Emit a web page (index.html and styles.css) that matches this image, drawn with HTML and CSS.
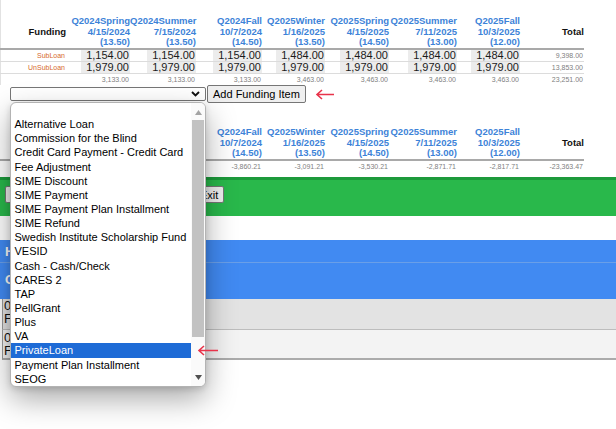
FILE: index.html
```html
<!DOCTYPE html>
<html>
<head>
<meta charset="utf-8">
<link rel="stylesheet" href="styles.css">
</head>
<body>
<div class="page">
  <table class="fund first">
    <colgroup>
      <col class="c-label"><col class="c-q1"><col class="c-q2"><col class="c-q3"><col class="c-q4"><col class="c-q5"><col class="c-q6"><col class="c-q7"><col class="c-total">
    </colgroup>
    <thead>
      <tr>
        <th class="lbl">Funding</th>
        <th class="q">Q2024Spring<br>4/15/2024<br>(13.50)</th>
        <th class="q">Q2024Summer<br>7/15/2024<br>(13.50)</th>
        <th class="q">Q2024Fall<br>10/7/2024<br>(14.50)</th>
        <th class="q">Q2025Winter<br>1/16/2025<br>(13.50)</th>
        <th class="q">Q2025Spring<br>4/15/2025<br>(14.50)</th>
        <th class="q">Q2025Summer<br>7/11/2025<br>(13.00)</th>
        <th class="q">Q2025Fall<br>10/3/2025<br>(12.00)</th>
        <th class="tot">Total</th>
      </tr>
    </thead>
    <tbody>
      <tr>
        <td class="name">SubLoan</td>
        <td><div class="amt">1,154.00</div></td>
        <td><div class="amt">1,154.00</div></td>
        <td><div class="amt">1,154.00</div></td>
        <td><div class="amt">1,484.00</div></td>
        <td><div class="amt">1,484.00</div></td>
        <td><div class="amt">1,484.00</div></td>
        <td><div class="amt">1,484.00</div></td>
        <td class="sum">9,398.00</td>
      </tr>
      <tr>
        <td class="name">UnSubLoan</td>
        <td><div class="amt">1,979.00</div></td>
        <td><div class="amt">1,979.00</div></td>
        <td><div class="amt">1,979.00</div></td>
        <td><div class="amt">1,979.00</div></td>
        <td><div class="amt">1,979.00</div></td>
        <td><div class="amt">1,979.00</div></td>
        <td><div class="amt">1,979.00</div></td>
        <td class="sum">13,853.00</td>
      </tr>
      <tr class="totals">
        <td></td>
        <td class="sum">3,133.00</td>
        <td class="sum">3,133.00</td>
        <td class="sum">3,133.00</td>
        <td class="sum">3,463.00</td>
        <td class="sum">3,463.00</td>
        <td class="sum">3,463.00</td>
        <td class="sum">3,463.00</td>
        <td class="sum">23,251.00</td>
      </tr>
    </tbody>
  </table>

  <div class="add-row">
    <div class="select">
      <svg class="chev" width="9" height="6" viewBox="0 0 9 6"><polyline points="1,1 4.5,4.5 8,1" fill="none" stroke="#111" stroke-width="1.9"/></svg>
    </div>
    <button class="btn">Add Funding Item</button>
    <svg class="red-arrow" width="20" height="11" viewBox="0 0 20 11"><path d="M19 5.5H2M7 1L2 5.5L7 10" fill="none" stroke="#e8334a" stroke-width="1.6"/></svg>
  </div>

  <table class="fund second">
    <colgroup>
      <col class="c-label"><col class="c-q1"><col class="c-q2"><col class="c-q3"><col class="c-q4"><col class="c-q5"><col class="c-q6"><col class="c-q7"><col class="c-total">
    </colgroup>
    <thead>
      <tr>
        <th class="lbl">Balance</th>
        <th class="q">Q2024Spring<br>4/15/2024<br>(13.50)</th>
        <th class="q">Q2024Summer<br>7/15/2024<br>(13.50)</th>
        <th class="q">Q2024Fall<br>10/7/2024<br>(14.50)</th>
        <th class="q">Q2025Winter<br>1/16/2025<br>(13.50)</th>
        <th class="q">Q2025Spring<br>4/15/2025<br>(14.50)</th>
        <th class="q">Q2025Summer<br>7/11/2025<br>(13.00)</th>
        <th class="q">Q2025Fall<br>10/3/2025<br>(12.00)</th>
        <th class="tot">Total</th>
      </tr>
    </thead>
    <tbody>
      <tr class="totals">
        <td></td>
        <td class="sum">-3,596.21</td>
        <td class="sum">-3,596.21</td>
        <td class="sum">-3,860.21</td>
        <td class="sum">-3,091.21</td>
        <td class="sum">-3,530.21</td>
        <td class="sum">-2,871.71</td>
        <td class="sum">-2,817.71</td>
        <td class="sum">-23,363.47</td>
      </tr>
    </tbody>
  </table>

  <div class="action-bar">
    <button class="btn">Save Changes</button>
    <button class="btn">Print Summary</button>
    <button class="btn">Exit</button>
  </div>

  <div class="grid">
    <div class="grid-head">History</div>
    <div class="grid-cols">Charges</div>
    <div class="grid-row odd"><div>0.00</div><div>Fee</div></div>
    <div class="grid-row even"><div>0.00</div><div>Fee</div></div>
  </div>

  <div class="popup">
    <div class="opts">
      <div class="opt"></div>
      <div class="opt">Alternative Loan</div>
      <div class="opt">Commission for the Blind</div>
      <div class="opt">Credit Card Payment - Credit Card</div>
      <div class="opt">Fee Adjustment</div>
      <div class="opt">SIME Discount</div>
      <div class="opt">SIME Payment</div>
      <div class="opt">SIME Payment Plan Installment</div>
      <div class="opt">SIME Refund</div>
      <div class="opt">Swedish Institute Scholarship Fund</div>
      <div class="opt">VESID</div>
      <div class="opt">Cash - Cash/Check</div>
      <div class="opt">CARES 2</div>
      <div class="opt">TAP</div>
      <div class="opt">PellGrant</div>
      <div class="opt">Plus</div>
      <div class="opt">VA</div>
      <div class="opt sel">PrivateLoan</div>
      <div class="opt">Payment Plan Installment</div>
      <div class="opt">SEOG</div>
    </div>
    <div class="sbar">
      <svg class="sb-up" width="7" height="5" viewBox="0 0 7 5"><polygon points="0,5 3.5,0 7,5" fill="#a3a3a3"/></svg>
      <div class="thumb"></div>
      <svg class="sb-down" width="7" height="5" viewBox="0 0 7 5"><polygon points="0,0 7,0 3.5,5" fill="#505050"/></svg>
    </div>
  </div>

  <svg class="red-arrow pick-arrow" width="22" height="11" viewBox="0 0 22 11"><path d="M21 5.5H2M7 1L2 5.5L7 10" fill="none" stroke="#e8334a" stroke-width="1.6"/></svg>
</div>
</body>
</html>
```

FILE: styles.css
```css
* { box-sizing: border-box; }
html, body { margin: 0; padding: 0; background: #fff; }
body {
  font-family: "Liberation Sans", Arial, sans-serif;
  width: 616px;
  height: 429px;
  overflow: hidden;
}
.page { position: relative; width: 616px; height: 429px; }

.fund {
  border-collapse: separate;
  border-spacing: 0;
  table-layout: fixed;
  width: 584px;
}
.fund.first { box-shadow: inset 1px 0 0 #e2e2e2; }
.c-label { width: 71px; }
.c-q1 { width: 59px; }
.c-q2 { width: 66px; }
.c-q3 { width: 66px; }
.c-q4 { width: 63px; }
.c-q5 { width: 64px; }
.c-q6 { width: 68px; }
.c-q7 { width: 63px; }
.c-total { width: 64px; }

.fund th {
  padding: 16px 0 0 0;
  font-size: 9.5px;
  font-weight: bold;
  line-height: 10.67px;
  text-align: right;
  white-space: nowrap;
  border-bottom: 2px solid #a9a9a9;
}
.fund.second th { padding-top: 24px; }
.fund th.q { color: #3d83d8; vertical-align: bottom; }
.fund th.lbl { color: #111; vertical-align: middle; padding-right: 5px; }
.fund th.tot { color: #111; vertical-align: middle; }

.fund td {
  padding: 0;
  height: 12px;
  border-bottom: 1px solid #dcdcdc;
  vertical-align: middle;
}
.fund tr.totals td { border-bottom: none; height: 11px; }
.fund td.name {
  font-size: 7px;
  color: #d66a2e;
  text-align: right;
  padding-right: 6px;
}
.fund td.sum {
  font-size: 7px;
  color: #808080;
  text-align: right;
  padding-right: 1px;
}
.amt {
  width: 49px;
  margin-left: auto;
  height: 11px;
  background: #ececec;
  font-size: 11px;
  line-height: 11px;
  color: #1b1b1b;
  text-align: right;
  padding-right: 1px;
}

.add-row {
  display: flex;
  align-items: center;
  height: 18px;
  padding-left: 10px;
}
.select {
  position: relative;
  width: 196px;
  height: 14px;
  border: 1px solid #767676;
  border-radius: 2px;
  background: #fff;
}
.chev { position: absolute; right: 5px; top: 3px; }
.btn {
  font-family: "Liberation Sans", Arial, sans-serif;
  font-size: 11px;
  height: 18px;
  padding: 0 5px;
  border: 1px solid #767676;
  border-radius: 2px;
  background: #efefef;
  color: #000;
  line-height: 14px;
}
.add-row .btn { margin-left: 1px; }
.red-arrow { display: block; }
.add-row .red-arrow { margin-left: 9px; }

.action-bar {
  margin-top: 5px;
  height: 39px;
  border-top: 3px solid #1c9a3b;
  background: #29b84b;
  padding: 6px 0 0 5px;
  display: flex;
  align-items: flex-start;
  gap: 10px;
}
.action-bar .btn { height: 17px; }

.grid { margin-top: 24px; }
.grid-head {
  height: 23px;
  background: #418af2;
  color: #fff;
  font-weight: bold;
  font-size: 13px;
  line-height: 23px;
  padding-left: 5px;
  border-bottom: 1px solid #6a9fe8;
}
.grid-cols {
  height: 36px;
  background: #418af2;
  color: #fff;
  font-weight: bold;
  font-size: 13px;
  line-height: 34px;
  padding-left: 5px;
}
.grid-row {
  margin-left: 2px;
  border-left: 1px solid #999;
  font-size: 13px;
  line-height: 13px;
  color: #111;
  padding-left: 1px;
}
.grid-row.odd { height: 31px; background: #e3e3e3; border-bottom: 1px solid #bdbdbd; }
.grid-row.even { height: 30px; background: #f3f3f3; border-bottom: 2px solid #ababab; padding-top: 1px; }

.popup {
  position: absolute;
  left: 10px;
  top: 102px;
  width: 196px;
  height: 285px;
  border: 1px solid #b3b3b3;
  border-radius: 6px;
  background: #fff;
  box-shadow: 0 12px 30px rgba(0,0,0,0.34), 0 2px 6px rgba(0,0,0,0.14);
  display: flex;
  overflow: hidden;
}
.opts { width: 180px; }
.opt {
  height: 14.15px;
  line-height: 14.15px;
  font-size: 11px;
  padding-left: 3.5px;
  color: #000;
  white-space: nowrap;
}
.opt.sel { background: #1e6bd6; color: #fff; }
.sbar { position: relative; width: 14px; background: #fafafa; }
.sb-up { position: absolute; left: 4px; top: 7px; }
.sb-down { position: absolute; left: 4px; top: 272px; }
.thumb {
  position: absolute;
  left: 1px;
  right: 1px;
  top: 17px;
  height: 217px;
  background: #c2c2c2;
}
.pick-arrow { position: absolute; left: 197px; top: 345px; }
```
